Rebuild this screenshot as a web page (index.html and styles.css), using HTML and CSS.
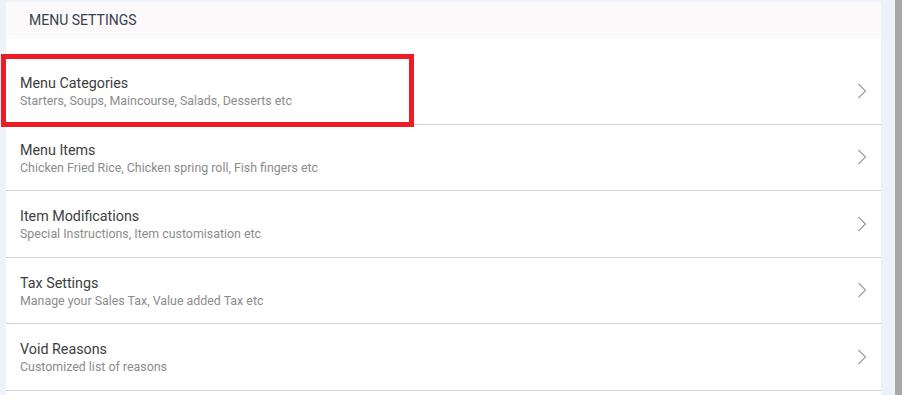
FILE: index.html
```html
<!DOCTYPE html>
<html lang="en">

<head>
    <meta charset="UTF-8">
    <meta name="viewport" content="width=device-width, initial-scale=1.0">
    <title>Menu Settings</title>
    <link rel="stylesheet" href="styles.css">
</head>

<body>
    <div class="page">
        <div class="settings-card">
            <div class="settings-header">MENU SETTINGS</div>
            <ul class="settings-list">
                <li class="settings-item">
                    <div class="item-text">
                        <div class="item-title">Menu Categories</div>
                        <div class="item-sub">Starters, Soups, Maincourse, Salads, Desserts etc</div>
                    </div>
                    <svg class="chevron" width="10" height="16" viewBox="0 0 10 16"><polyline points="1.5,1 8.5,8 1.5,15" /></svg>
                </li>
                <li class="settings-item">
                    <div class="item-text">
                        <div class="item-title">Menu Items</div>
                        <div class="item-sub">Chicken Fried Rice, Chicken spring roll, Fish fingers etc</div>
                    </div>
                    <svg class="chevron" width="10" height="16" viewBox="0 0 10 16"><polyline points="1.5,1 8.5,8 1.5,15" /></svg>
                </li>
                <li class="settings-item">
                    <div class="item-text">
                        <div class="item-title">Item Modifications</div>
                        <div class="item-sub">Special Instructions, Item customisation etc</div>
                    </div>
                    <svg class="chevron" width="10" height="16" viewBox="0 0 10 16"><polyline points="1.5,1 8.5,8 1.5,15" /></svg>
                </li>
                <li class="settings-item">
                    <div class="item-text">
                        <div class="item-title">Tax Settings</div>
                        <div class="item-sub">Manage your Sales Tax, Value added Tax etc</div>
                    </div>
                    <svg class="chevron" width="10" height="16" viewBox="0 0 10 16"><polyline points="1.5,1 8.5,8 1.5,15" /></svg>
                </li>
                <li class="settings-item">
                    <div class="item-text">
                        <div class="item-title">Void Reasons</div>
                        <div class="item-sub">Customized list of reasons</div>
                    </div>
                    <svg class="chevron" width="10" height="16" viewBox="0 0 10 16"><polyline points="1.5,1 8.5,8 1.5,15" /></svg>
                </li>
            </ul>
        </div>
        <div class="scroll-track"></div>
    </div>
    <!-- 标注框 -->
    <div class="highlight-box"></div>
</body>

</html>
```

FILE: styles.css
```css
ul,
li,
div,
body {
    padding: 0px;
    margin: 0px;
}

ul {
    list-style: none;
}

body {
    background: #edf1f9;
    font-family: Roboto, "Liberation Sans", sans-serif;
    overflow: hidden;
}

.page {
    display: flex;
    height: 395px;
}

.settings-card {
    width: 875px;
    margin: 2px 0px 0px 6px;
    background: #ffffff;
}

.settings-header {
    height: 37px;
    line-height: 37px;
    padding-left: 23px;
    background: #fcf9fa;
    font-size: 14px;
    color: #3a404c;
}

.settings-list {
    padding-top: 19px;
}

.settings-item {
    display: flex;
    align-items: center;
    padding: 15px 14px 15px 14px;
    border-bottom: 1px solid #d4d4d4;
}

.item-text {
    flex: 1;
}

.item-title {
    font-size: 14.3px;
    line-height: 20px;
    color: #3d3d3d;
}

.item-sub {
    font-size: 12.4px;
    line-height: 15.5px;
    color: #8c8c8c;
}

.chevron polyline {
    fill: none;
    stroke: #a3a3a3;
    stroke-width: 1.3;
}

.scroll-track {
    width: 7px;
    margin-left: auto;
    background: #a9a9a9;
}

.highlight-box {
    position: absolute;
    left: 1px;
    top: 54px;
    width: 413px;
    height: 73px;
    box-sizing: border-box;
    border: 5px solid #ed1c24;
}
```
